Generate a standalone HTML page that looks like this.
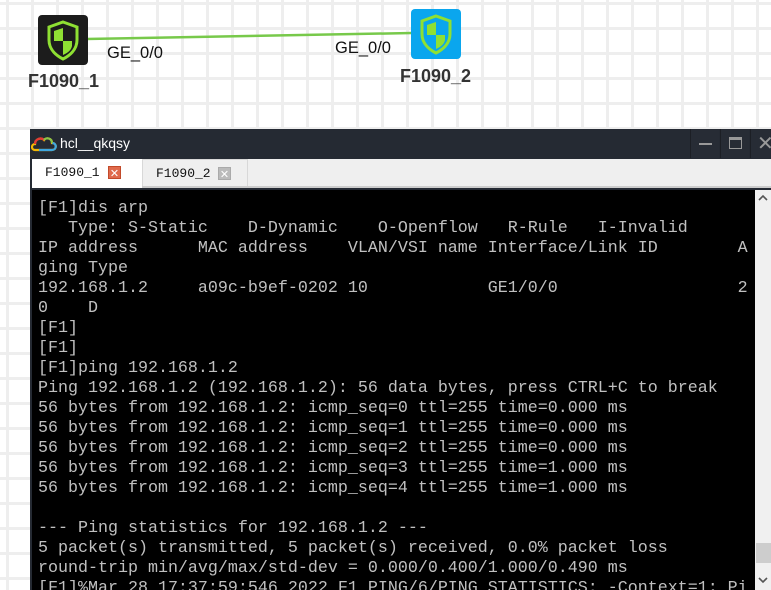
<!DOCTYPE html>
<html><head><meta charset="utf-8"><style>
*{margin:0;padding:0;box-sizing:border-box}
html,body{width:771px;height:590px;overflow:hidden;background:#fff;font-family:"Liberation Sans",sans-serif}
.grid{position:absolute;left:0;top:0;width:771px;height:590px;
background-image:linear-gradient(#eeeeee 3px,transparent 3px),linear-gradient(90deg,#eeeeee 3px,transparent 3px);
background-size:25px 25px;background-position:6px 2px}
.lbl{position:absolute;font-size:16.5px;color:#111}
.name{position:absolute;font-size:18px;font-weight:bold;color:#333}
.win{position:absolute;left:30px;top:129px;width:741px;height:461px;background:#252a33}
.title{position:absolute;left:30px;top:129px;width:741px;height:30px;background:#252a33;color:#fff;font-size:14px}
.tabs{position:absolute;left:32px;top:159px;width:739px;height:29px;background:#efefef;border-bottom:2px solid #ccc}
.tab{position:absolute;top:0;height:27px;font-family:"Liberation Mono",monospace;font-size:13px;color:#111;line-height:27px;padding-left:13px}
.x{position:absolute;top:7px;width:13px;height:13px;color:#fff;font-size:11px;line-height:13px;text-align:center;font-family:"DejaVu Sans",sans-serif;font-weight:bold}
.term{position:absolute;left:32px;top:190px;width:723px;height:400px;background:#000;overflow:hidden}
pre{position:absolute;left:6px;top:9px;font-family:"Liberation Mono",monospace;font-size:16.67px;line-height:20px;color:#c0c0c0}
.sb{position:absolute;left:755px;top:190px;width:16px;height:400px;background:#f0f0f0}
</style></head><body>
<div class="grid"></div>
<svg style="position:absolute;left:0;top:0" width="771" height="130">
<line x1="86" y1="39" x2="412" y2="33" stroke="#77c94a" stroke-width="2.5"/>
<rect x="38" y="15" width="50" height="50" rx="4" fill="#1c1c1c"/>
<rect x="411" y="9" width="50" height="50" rx="4" fill="#0aa6ee"/>
<g transform="translate(45,20)">
<path d="M18 2 L32 7 V20 C32 30 24 36 18 39 C12 36 4 30 4 20 V7 Z" fill="none" stroke="#8fe033" stroke-width="3"/>
<path d="M18 8 V21 H9 V11 Z M18 21 H27 V26 C26 31 22 33 18 35 Z" fill="#8fe033"/>
</g>
<g transform="translate(418,14)">
<path d="M18 2 L32 7 V20 C32 30 24 36 18 39 C12 36 4 30 4 20 V7 Z" fill="none" stroke="#8fe033" stroke-width="3"/>
<path d="M18 8 V21 H9 V11 Z M18 21 H27 V26 C26 31 22 33 18 35 Z" fill="#8fe033"/>
</g>
</svg>
<div class="lbl" style="left:107px;top:44px">GE_0/0</div>
<div class="lbl" style="left:335px;top:39px">GE_0/0</div>
<div class="name" style="left:28px;top:71px">F1090_1</div>
<div class="name" style="left:400px;top:66px">F1090_2</div>
<div class="win"></div>
<div class="title">
<svg style="position:absolute;left:1px;top:7px" width="28" height="16"><path d="M4 14 C0 14 0 8 4 8 C4 3 10 1 13 4 C15 1 21 2 21 7 C26 7 26 14 21 14 Z" fill="none" stroke="#f2b705" stroke-width="2.2"/><path d="M4 8 C4 3 10 1 13 4" fill="none" stroke="#e53935" stroke-width="2.2"/><path d="M8 14 H21 C26 14 26 7 21 7" fill="none" stroke="#3fa7e0" stroke-width="2.2"/><path d="M13 4 C15 1 21 2 21 7" fill="none" stroke="#8bc34a" stroke-width="2.2"/></svg>
<span style="position:absolute;left:30px;top:6px">hcl__qkqsy</span>
<div style="position:absolute;left:660px;top:0;width:29px;height:29px;background:#272c35;border-left:1px solid #1c1f25"><div style="position:absolute;left:8px;top:14px;width:13px;height:2px;background:#999"></div></div>
<div style="position:absolute;left:690px;top:0;width:29px;height:29px;background:#272c35;border-left:1px solid #1c1f25"><div style="position:absolute;left:8px;top:8px;width:13px;height:12px;border:1.5px solid #999;border-top-width:3px"></div></div>
<div style="position:absolute;left:720px;top:0;width:21px;height:29px;background:#272c35;border-left:1px solid #1c1f25;color:#999;font-size:20px;line-height:29px;padding-left:6px;font-family:'DejaVu Sans',sans-serif">✕</div>
</div>
<div class="tabs">
<div class="tab" style="left:0;width:110px;background:#fff;height:29px">F1090_1<div class="x" style="left:76px;background:#e06a4c;border:1px solid #c24a2a">✕</div></div>
<div class="tab" style="left:110px;width:106px;border:1px solid #d8d8d8;border-bottom:none">F1090_2<div class="x" style="left:75px;background:#bbb;border:1px solid #aaa">✕</div></div>
</div>
<div class="term"><pre>[F1]dis arp
   Type: S-Static    D-Dynamic    O-Openflow   R-Rule   I-Invalid
IP address      MAC address    VLAN/VSI name Interface/Link ID        A
ging Type
192.168.1.2     a09c-b9ef-0202 10            GE1/0/0                  2
0    D
[F1]
[F1]
[F1]ping 192.168.1.2
Ping 192.168.1.2 (192.168.1.2): 56 data bytes, press CTRL+C to break
56 bytes from 192.168.1.2: icmp_seq=0 ttl=255 time=0.000 ms
56 bytes from 192.168.1.2: icmp_seq=1 ttl=255 time=0.000 ms
56 bytes from 192.168.1.2: icmp_seq=2 ttl=255 time=0.000 ms
56 bytes from 192.168.1.2: icmp_seq=3 ttl=255 time=1.000 ms
56 bytes from 192.168.1.2: icmp_seq=4 ttl=255 time=1.000 ms

--- Ping statistics for 192.168.1.2 ---
5 packet(s) transmitted, 5 packet(s) received, 0.0% packet loss
round-trip min/avg/max/std-dev = 0.000/0.400/1.000/0.490 ms
[F1]%Mar 28 17:37:59:546 2022 F1 PING/6/PING_STATISTICS: -Context=1; Pi</pre></div>
<div class="sb">
<svg style="position:absolute;left:3px;top:4px" width="10" height="8"><path d="M1 6 L5 2 L9 6" fill="none" stroke="#555" stroke-width="1.6"/></svg>
<div style="position:absolute;left:1px;top:353px;width:15px;height:20px;background:#cdcdcd"></div>
<svg style="position:absolute;left:3px;top:386px" width="10" height="8"><path d="M1 2 L5 6 L9 2" fill="none" stroke="#555" stroke-width="1.6"/></svg>
</div>
</body></html>
